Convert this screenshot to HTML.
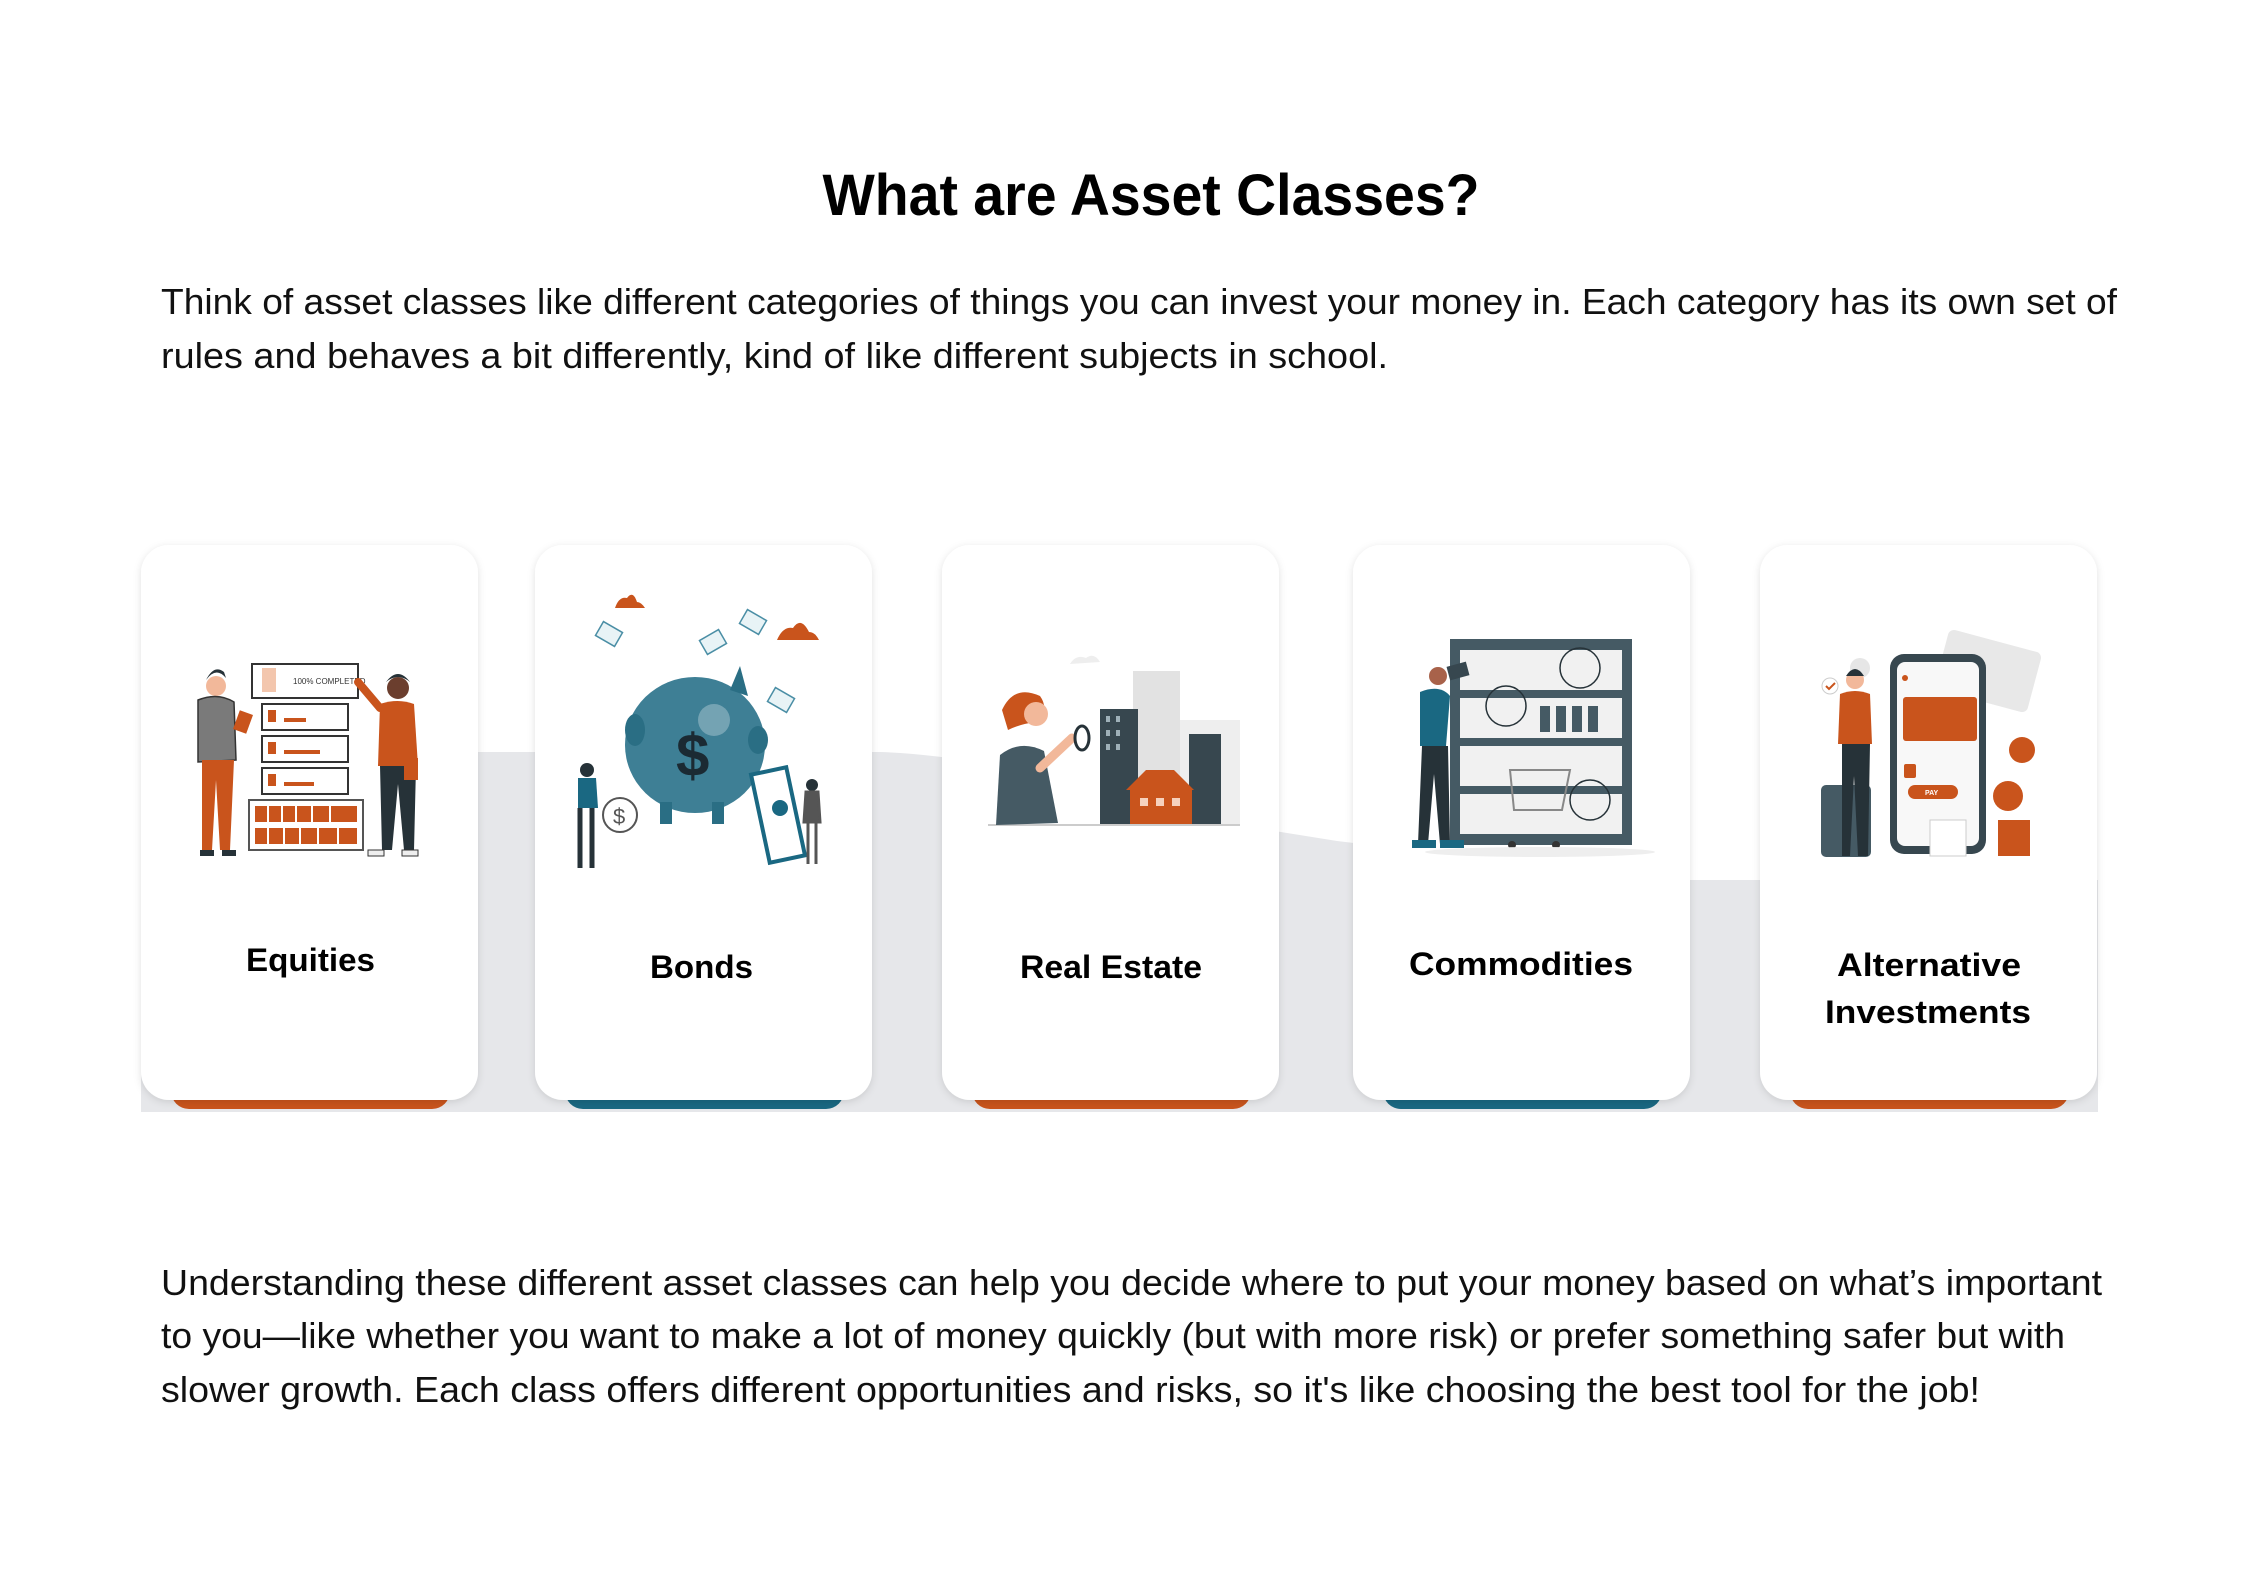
<!DOCTYPE html>
<html><head><meta charset="utf-8"><style>
html,body{margin:0;padding:0;background:#fff;}
svg{display:block;}
</style></head><body>
<svg width="2245" height="1587" viewBox="0 0 2245 1587" xmlns="http://www.w3.org/2000/svg" font-family="Liberation Sans, sans-serif">
<defs>
<filter id="sh" x="-10%" y="-10%" width="120%" height="120%"><feDropShadow dx="0" dy="2" stdDeviation="4" flood-color="#000" flood-opacity="0.12"/></filter>
</defs>
<rect width="2245" height="1587" fill="#fff"/>
<text x="1151" y="215" text-anchor="middle" font-size="58" font-weight="bold" textLength="657" lengthAdjust="spacingAndGlyphs" fill="#000">What are Asset Classes?</text>
<g font-size="36" fill="#111">
<text x="161" y="314" textLength="1956" lengthAdjust="spacingAndGlyphs">Think of asset classes like different categories of things you can invest your money in. Each category has its own set of</text>
<text x="161" y="368" textLength="1227" lengthAdjust="spacingAndGlyphs">rules and behaves a bit differently, kind of like different subjects in school.</text>
<text x="161" y="1295" textLength="1941" lengthAdjust="spacingAndGlyphs">Understanding these different asset classes can help you decide where to put your money based on what’s important</text>
<text x="161" y="1348" textLength="1904" lengthAdjust="spacingAndGlyphs">to you—like whether you want to make a lot of money quickly (but with more risk) or prefer something safer but with</text>
<text x="161" y="1402" textLength="1819" lengthAdjust="spacingAndGlyphs">slower growth. Each class offers different opportunities and risks, so it's like choosing the best tool for the job!</text>
</g>
<!-- grey band -->
<path d="M141,752 L880,752 C1000,756 1150,800 1262,829 L1337,841 C1500,860 1600,878 1690,880 L2098,880 L2098,1112 L141,1112 Z" fill="#e6e7ea"/>
<!-- bottom bars -->
<g>
<rect x="171" y="1070" width="279" height="39" rx="18" fill="#c9541c"/>
<rect x="565" y="1070" width="279" height="39" rx="18" fill="#1a6882"/>
<rect x="972" y="1070" width="279" height="39" rx="18" fill="#c9541c"/>
<rect x="1383" y="1070" width="279" height="39" rx="18" fill="#1a6882"/>
<rect x="1790" y="1070" width="279" height="39" rx="18" fill="#c9541c"/>
</g>
<!-- cards -->
<g fill="#fff" filter="url(#sh)">
<rect x="141" y="545" width="337" height="555" rx="28"/>
<rect x="535" y="545" width="337" height="555" rx="28"/>
<rect x="942" y="545" width="337" height="555" rx="28"/>
<rect x="1353" y="545" width="337" height="555" rx="28"/>
<rect x="1760" y="545" width="337" height="555" rx="28"/>
</g>
<g font-size="32" font-weight="bold" fill="#000">
<text x="246" y="971" textLength="129" lengthAdjust="spacingAndGlyphs">Equities</text>
<text x="650" y="978" textLength="103" lengthAdjust="spacingAndGlyphs">Bonds</text>
<text x="1020" y="978" textLength="182" lengthAdjust="spacingAndGlyphs">Real Estate</text>
<text x="1409" y="975" textLength="224" lengthAdjust="spacingAndGlyphs">Commodities</text>
<text x="1837" y="976" textLength="184" lengthAdjust="spacingAndGlyphs">Alternative</text>
<text x="1825" y="1023" textLength="206" lengthAdjust="spacingAndGlyphs">Investments</text>
</g>

<!-- Card1 illustration -->
<g>
<rect x="252" y="664" width="106" height="34" fill="#fff" stroke="#333" stroke-width="2"/>
<rect x="262" y="668" width="14" height="24" fill="#f3c6ad"/>
<text x="293" y="684" font-size="8" fill="#333">100% COMPLETED</text>
<g fill="#fff" stroke="#333" stroke-width="2">
<rect x="262" y="704" width="86" height="26"/><rect x="262" y="736" width="86" height="26"/><rect x="262" y="768" width="86" height="26"/>
</g>
<g fill="#c9541c"><rect x="284" y="718" width="22" height="4"/><rect x="284" y="750" width="36" height="4"/><rect x="284" y="782" width="30" height="4"/>
<rect x="268" y="710" width="8" height="12"/><rect x="268" y="742" width="8" height="12"/><rect x="268" y="774" width="8" height="12"/></g>
<rect x="249" y="800" width="114" height="50" fill="#fff" stroke="#555" stroke-width="2"/>
<g fill="#c9541c"><rect x="255" y="806" width="102" height="16"/><rect x="255" y="828" width="102" height="16"/></g>
<g stroke="#fff" stroke-width="2"><path d="M268,806v16M282,806v16M296,806v16M312,806v16M330,806v16M268,828v16M284,828v16M300,828v16M318,828v16M338,828v16"/></g>
<!-- left man -->
<circle cx="216" cy="686" r="10" fill="#f2b89a"/><path d="M206,680 q10,-14 20,-2 l-2,-6 q-10,-8 -18,8z" fill="#263238"/>
<path d="M198,700 q20,-8 36,2 l2,58 l-38,2z" fill="#7a7a7a" stroke="#333" stroke-width="1.5"/>
<path d="M202,760 h32 l-4,90 h-10 l-4,-70 l-4,70 h-10z" fill="#c9541c"/>
<rect x="200" y="850" width="14" height="6" fill="#263238"/><rect x="222" y="850" width="14" height="6" fill="#263238"/>
<rect x="236" y="712" width="14" height="20" fill="#c9541c" transform="rotate(20 243 722)"/>
<!-- right man -->
<circle cx="398" cy="688" r="11" fill="#6b3e2e"/><path d="M386,682 q12,-16 24,0 q-12,-10 -24,0z" fill="#263238"/>
<path d="M380,704 q18,-6 34,0 l4,62 h-40z" fill="#c9541c"/>
<path d="M380,708 l-22,-26" stroke="#c9541c" stroke-width="8" stroke-linecap="round"/>
<path d="M380,766 h36 l-2,84 h-10 l-6,-66 l-6,66 h-10z" fill="#263238"/>
<rect x="404" y="758" width="14" height="22" fill="#c9541c"/>
<rect x="368" y="850" width="16" height="6" fill="#eee" stroke="#333"/><rect x="402" y="850" width="16" height="6" fill="#eee" stroke="#333"/>
</g>

<!-- Card2 illustration -->
<g>
<path d="M615,608 q4,-12 12,-10 q6,-8 10,4 q4,0 8,6z" fill="#c9541c"/>
<path d="M777,640 q6,-14 16,-12 q8,-12 16,4 q6,0 10,8z" fill="#c9541c"/>
<g fill="#e8f3f6" stroke="#4a8ea5" stroke-width="1.5">
<rect x="598" y="626" width="22" height="16" transform="rotate(30 609 634)"/>
<rect x="702" y="634" width="22" height="16" transform="rotate(-30 713 642)"/>
<rect x="742" y="614" width="22" height="16" transform="rotate(30 753 622)"/>
<rect x="770" y="692" width="22" height="16" transform="rotate(30 781 700)"/>
</g>
<ellipse cx="695" cy="745" rx="70" ry="68" fill="#3e7f95"/>
<path d="M730,690 l10,-24 l8,30z" fill="#2a6e84"/>
<ellipse cx="635" cy="730" rx="10" ry="16" fill="#2a6e84"/><ellipse cx="758" cy="740" rx="10" ry="14" fill="#2a6e84"/>
<circle cx="714" cy="720" r="16" fill="#8bb2c0" opacity="0.7"/>
<text x="676" y="776" font-size="60" font-weight="bold" fill="#1b2a33">$</text>
<rect x="660" y="802" width="12" height="22" fill="#2a6e84"/><rect x="712" y="802" width="12" height="22" fill="#2a6e84"/>
<circle cx="620" cy="815" r="17" fill="#fff" stroke="#555" stroke-width="2"/><text x="613" y="824" font-size="22" fill="#555">$</text>
<circle cx="587" cy="770" r="7" fill="#263238"/>
<path d="M578,778 h18 l2,30 h-20z" fill="#1a6882"/>
<path d="M580,808 v60 M592,808 v60" stroke="#263238" stroke-width="5"/>
<rect x="760" y="770" width="36" height="90" fill="#fff" stroke="#1a6882" stroke-width="4" transform="rotate(-12 778 815)"/>
<circle cx="780" cy="808" r="8" fill="#1a6882"/>
<circle cx="812" cy="785" r="6" fill="#263238"/><path d="M806,792 h12 l2,30 h-16z M808,822 v42 M816,822 v42" fill="#555" stroke="#555" stroke-width="3"/>
</g>

<!-- Card3 illustration -->
<g>
<path d="M1070,664 q6,-10 16,-6 q8,-6 14,4z" fill="#eee"/>
<rect x="1133" y="671" width="47" height="154" fill="#e2e2e2"/>
<rect x="1180" y="720" width="60" height="105" fill="#eee"/>
<rect x="1100" y="709" width="38" height="116" fill="#37474f"/>
<rect x="1189" y="734" width="32" height="91" fill="#37474f"/>
<g fill="#c9541c"><path d="M1126,790 l20,-20 h28 l20,20z"/><rect x="1130" y="790" width="62" height="35"/></g>
<g fill="#f6d1bd"><rect x="1140" y="798" width="8" height="8"/><rect x="1156" y="798" width="8" height="8"/><rect x="1172" y="798" width="8" height="8"/></g>
<g fill="#9fb1b9"><rect x="1106" y="716" width="4" height="6"/><rect x="1116" y="716" width="4" height="6"/><rect x="1106" y="730" width="4" height="6"/><rect x="1116" y="730" width="4" height="6"/><rect x="1106" y="744" width="4" height="6"/><rect x="1116" y="744" width="4" height="6"/></g>
<line x1="988" y1="825" x2="1240" y2="825" stroke="#ccc" stroke-width="2"/>
<path d="M1002,710 q12,-26 38,-14 q10,14 -4,26 q-16,2 -28,8z" fill="#c9541c"/>
<circle cx="1036" cy="714" r="12" fill="#f2b89a"/>
<path d="M996,825 l4,-70 q20,-16 44,-4 l14,72z" fill="#455a64"/>
<path d="M1040,768 l32,-30" stroke="#f2b89a" stroke-width="9" stroke-linecap="round"/>
<ellipse cx="1082" cy="738" rx="7" ry="12" fill="none" stroke="#263238" stroke-width="3"/>
</g>

<!-- Card4 illustration -->
<g>
<rect x="1450" y="639" width="182" height="206" fill="#455a64"/>
<g fill="#f1f1f1"><rect x="1460" y="650" width="162" height="40"/><rect x="1460" y="698" width="162" height="40"/><rect x="1460" y="746" width="162" height="40"/><rect x="1460" y="794" width="162" height="40"/></g>
<g fill="#455a64"><rect x="1540" y="706" width="10" height="26"/><rect x="1556" y="706" width="10" height="26"/><rect x="1572" y="706" width="10" height="26"/><rect x="1588" y="706" width="10" height="26"/></g>
<g fill="none" stroke="#263238" stroke-width="1.5"><circle cx="1580" cy="668" r="20"/><circle cx="1506" cy="706" r="20"/><circle cx="1590" cy="800" r="20"/></g>
<path d="M1510,770 h60 l-8,40 h-48z" fill="none" stroke="#888" stroke-width="2"/>
<circle cx="1512" cy="845" r="4" fill="#333"/><circle cx="1556" cy="845" r="4" fill="#333"/>
<ellipse cx="1540" cy="852" rx="115" ry="5" fill="#eee"/>
<circle cx="1438" cy="676" r="9" fill="#a8624a"/>
<path d="M1420,692 q20,-8 30,4 l-4,50 h-26z" fill="#1a6882"/>
<path d="M1422,746 h26 l2,98 h-10 l-6,-70 l-6,70 h-10z" fill="#263238"/>
<rect x="1412" y="840" width="24" height="8" fill="#1a6882"/><rect x="1440" y="840" width="24" height="8" fill="#1a6882"/>
<rect x="1448" y="664" width="20" height="14" fill="#37474f" transform="rotate(-15 1458 671)"/>
</g>

<!-- Card5 illustration -->
<g>
<rect x="1940" y="640" width="96" height="62" rx="6" fill="#e8e8e8" transform="rotate(15 1988 671)"/>
<circle cx="1860" cy="668" r="10" fill="#e6e6e6"/>
<rect x="1821" y="785" width="50" height="72" rx="5" fill="#455a64"/>
<rect x="1890" y="654" width="96" height="200" rx="14" fill="#37474f"/>
<rect x="1897" y="662" width="82" height="184" rx="8" fill="#f8f8f8"/>
<rect x="1903" y="697" width="74" height="44" rx="3" fill="#c9541c"/>
<rect x="1908" y="785" width="50" height="14" rx="7" fill="#c9541c"/>
<text x="1925" y="795" font-size="7" fill="#fff" font-weight="bold">PAY</text>
<rect x="1904" y="764" width="12" height="14" rx="2" fill="#c9541c"/>
<circle cx="1905" cy="678" r="3" fill="#c9541c"/>
<path d="M1930,820 h36 v36 h-36z" fill="#fff" stroke="#ccc"/>
<g fill="#c9541c"><rect x="1998" y="820" width="32" height="36"/><circle cx="2008" cy="796" r="15"/><circle cx="2022" cy="750" r="13"/></g>
<circle cx="1830" cy="686" r="8" fill="#fff" stroke="#ccc"/><path d="M1826,686 l3,3 l6,-6" stroke="#c9541c" stroke-width="2" fill="none"/>
<circle cx="1855" cy="680" r="9" fill="#f2b89a"/><path d="M1846,676 q9,-14 18,0z" fill="#263238"/>
<path d="M1840,694 q15,-6 30,0 l2,50 h-34z" fill="#c9541c"/>
<path d="M1842,744 h28 l-2,112 h-10 l-4,-80 l-4,80 h-8z" fill="#263238"/>
</g>
</svg>
</body></html>
